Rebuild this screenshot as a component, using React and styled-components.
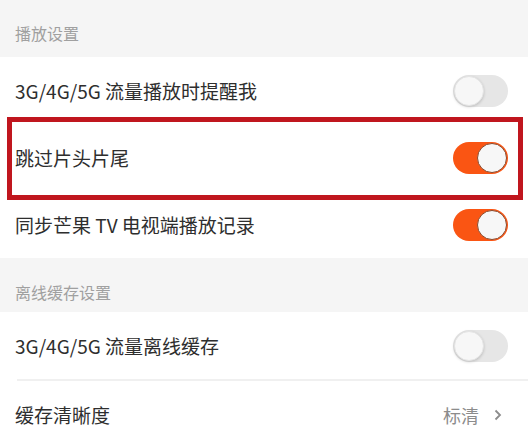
import React from 'react';
import styled, { createGlobalStyle } from 'styled-components';

const GlobalStyle = createGlobalStyle`
  body {
    margin: 0;
    background: #ffffff;
    font-family: "Noto Sans CJK SC", "Noto Sans", sans-serif;
  }
`;

const Page = styled.div`
  width: 528px;
  height: 444px;
  overflow: hidden;
  background: #ffffff;
`;

const SectionHeader = styled.div`
  height: ${(p) => p.height}px;
  box-sizing: border-box;
  padding: ${(p) => p.top}px 15px 0;
  background: #f5f5f5;
  color: #a0a0a0;
  font-size: 16px;
  line-height: 22px;
`;

const Row = styled.div`
  position: relative;
  display: flex;
  align-items: center;
  justify-content: space-between;
  height: ${(p) => p.height || 67}px;
  padding: 0 20px 0 15px;
  box-sizing: border-box;
  color: #2e2e2e;
  font-size: 19px;
`;

const Divider = styled.div`
  height: 2px;
  margin-left: 17px;
  background: #f0f0f0;
`;

const Highlight = styled.div`
  position: absolute;
  top: -7px;
  bottom: -9px;
  left: 7px;
  right: 5px;
  border: 5px solid #c0161e;
  pointer-events: none;
`;

const Toggle = styled.div`
  position: relative;
  width: 55px;
  height: 32px;
  border-radius: 16px;
  background: ${(p) => (p.on ? '#fa5513' : '#e6e6e6')};
  flex-shrink: 0;
`;

const Knob = styled.div`
  position: absolute;
  top: 1px;
  left: ${(p) => (p.on ? '24px' : '1px')};
  width: 30px;
  height: 30px;
  box-sizing: border-box;
  border-radius: 50%;
  background: #f7f7f7;
  border: ${(p) => (p.on ? '1.5px solid #8a4a2c' : '1px solid #e4e4e4')};
  box-shadow: ${(p) => (p.on ? 'none' : '0 1px 3px rgba(0,0,0,0.18)')};
`;

const Value = styled.div`
  display: flex;
  align-items: center;
  gap: 15px;
  color: #8c8c8c;
  font-size: 18px;
  margin-right: 6px;
`;

function Switch({ on }) {
  return (
    <Toggle on={on ? 1 : 0}>
      <Knob on={on ? 1 : 0} />
    </Toggle>
  );
}

export default function App() {
  return (
    <Page>
      <GlobalStyle />
      <SectionHeader height={57} top={22}>播放设置</SectionHeader>
      <Row>
        <span>3G/4G/5G 流量播放时提醒我</span>
        <Switch />
      </Row>
      <Row>
        <span>跳过片头片尾</span>
        <Switch on />
        <Highlight />
      </Row>
      <Row>
        <span>同步芒果 TV 电视端播放记录</span>
        <Switch on />
      </Row>
      <SectionHeader height={54} top={23}>离线缓存设置</SectionHeader>
      <Row>
        <span>3G/4G/5G 流量离线缓存</span>
        <Switch />
      </Row>
      <Divider />
      <Row>
        <span>缓存清晰度</span>
        <Value>
          <span>标清</span>
          <svg width="8" height="12" viewBox="0 0 8 12">
            <path d="M1.5 1.5 L6 6 L1.5 10.5" fill="none" stroke="#8c8c8c" strokeWidth="1.8" />
          </svg>
        </Value>
      </Row>
    </Page>
  );
}
